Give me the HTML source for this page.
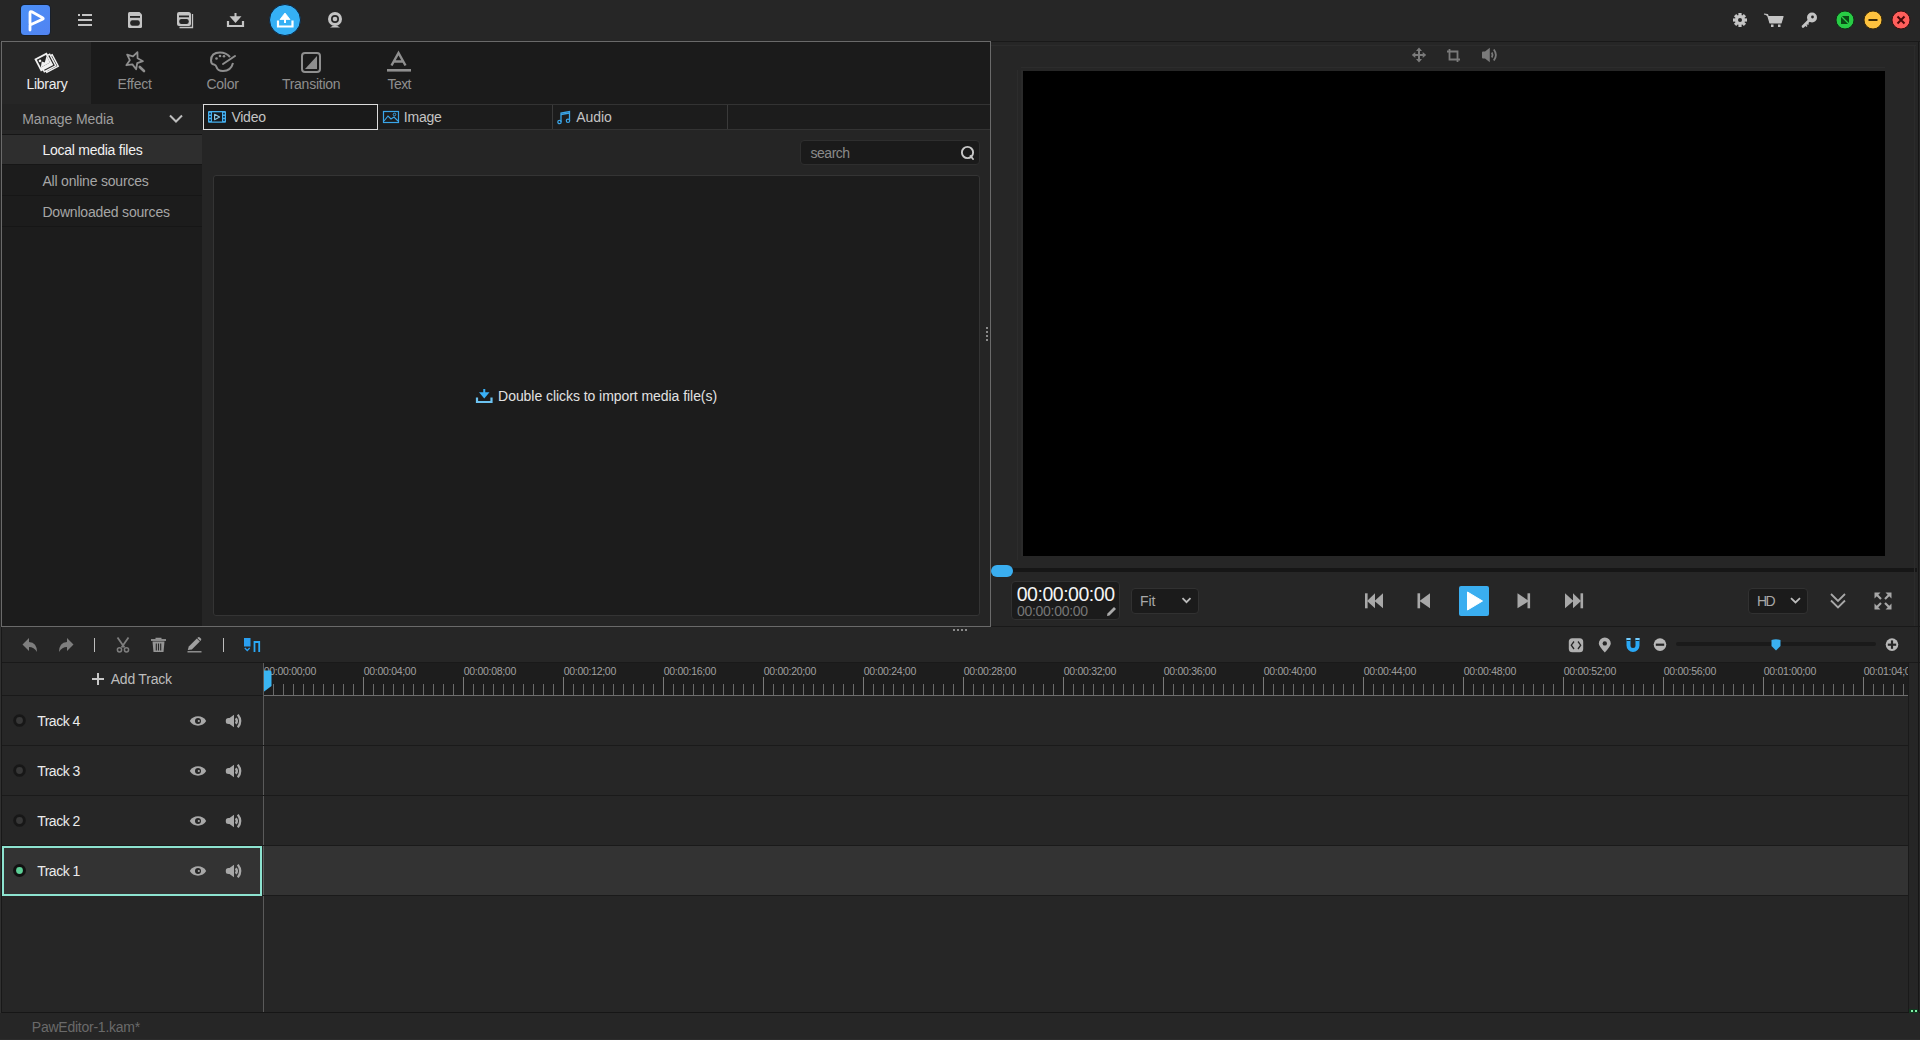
<!DOCTYPE html>
<html><head><meta charset="utf-8">
<style>
*{margin:0;padding:0;box-sizing:border-box}
html,body{width:1920px;height:1040px;overflow:hidden;background:#262626;font-family:"Liberation Sans",sans-serif;color:#aaa}
.a{position:absolute}
svg{position:absolute;overflow:visible}
.t{position:absolute;white-space:nowrap;line-height:1}
</style></head><body>
<div class="a" style="left:0px;top:0px;width:1920px;height:41px;background:#262626;"></div>
<div class="a" style="left:0px;top:41px;width:1920px;height:1px;background:#191919;"></div>
<svg style="left:20px;top:4px" width="32" height="32" viewBox="0 0 32 32"><defs><linearGradient id="lg" x1="0" y1="0" x2="1" y2="1"><stop offset="0" stop-color="#4a90f6"/><stop offset="1" stop-color="#5283f2"/></linearGradient></defs><rect x="0.5" y="0.5" width="30" height="31" rx="4" fill="#0b1a33"/><rect x="1" y="1" width="29" height="30" rx="3.5" fill="url(#lg)"/><path d="M10,26 V21 L22.5,15.2 Q24,14.5 22.5,13.7 L11.8,7.8 Q10,7 10,9 V19.5" fill="none" stroke="#fff" stroke-width="2.8" stroke-linecap="round" stroke-linejoin="round"/></svg>
<svg style="left:76px;top:12px" width="18" height="16" viewBox="0 0 18 16"><rect x="2" y="2" width="2" height="2" fill="#c4c4c4"/><rect x="6" y="2" width="10" height="2" fill="#c4c4c4"/><rect x="2" y="7" width="14" height="2" fill="#c4c4c4"/><rect x="2" y="12" width="14" height="2" fill="#c4c4c4"/></svg>
<svg style="left:126px;top:10px" width="18" height="20" viewBox="0 0 18 20"><path d="M3.5,2 H13.5 L16,4.5 V16.5 Q16,18 14.5,18 H3.5 Q2,18 2,16.5 V3.5 Q2,2 3.5,2 Z" fill="#c4c4c4"/><rect x="4" y="6" width="10" height="1.8" fill="#262626"/><rect x="4.2" y="10.2" width="9.6" height="5.6" rx="2.2" fill="#262626"/></svg>
<svg style="left:175px;top:10px" width="20" height="20" viewBox="0 0 20 20"><path d="M4,2 H13.5 Q16,2 16,4.5 V14 Q16,16 14,16 H4 Q2,16 2,14 V4 Q2,2 4,2 Z" fill="#c4c4c4"/><rect x="4" y="5.5" width="10" height="1.8" fill="#262626"/><rect x="4.2" y="9" width="9.6" height="5" rx="2.2" fill="#262626"/><path d="M17.5,4 V17.5 H4.5" fill="none" stroke="#c4c4c4" stroke-width="1.3"/></svg>
<svg style="left:225px;top:11px" width="20" height="18" viewBox="0 0 20 18"><path d="M3,10 V15 H18 V10" fill="none" stroke="#c4c4c4" stroke-width="2.2"/><rect x="9.5" y="2" width="2" height="6" fill="#c4c4c4"/><path d="M4.5,5.2 H16.5 L10.5,12 Z" fill="#c4c4c4"/></svg>
<svg style="left:268px;top:3px" width="34" height="34" viewBox="0 0 34 34"><circle cx="17" cy="17" r="15.5" fill="#35b0f5" stroke="#0b2540" stroke-width="1"/><path d="M10,17.5 V23.5 H24.5 V17.5" fill="none" stroke="#fff" stroke-width="2.2"/><path d="M12,16.5 L17,10 L22,16.5 Z" fill="#fff" stroke="#fff" stroke-width="0.8" stroke-linejoin="round"/><rect x="16" y="15" width="2" height="5" fill="#fff"/></svg>
<svg style="left:326px;top:10px" width="18" height="20" viewBox="0 0 18 20"><circle cx="9" cy="9" r="7" fill="#c4c4c4"/><circle cx="9" cy="9" r="4" fill="#262626"/><circle cx="9" cy="9" r="2.3" fill="#c4c4c4"/><path d="M4,17.5 Q9,13.5 14,17.5 Z" fill="#c4c4c4"/></svg>
<svg style="left:1732px;top:12px" width="16" height="16" viewBox="0 0 16 16"><g fill="#c4c4c4" transform="translate(8,8)"><rect x="-1.6" y="-7" width="3.2" height="4" transform="rotate(0)"/><rect x="-1.6" y="-7" width="3.2" height="4" transform="rotate(45)"/><rect x="-1.6" y="-7" width="3.2" height="4" transform="rotate(90)"/><rect x="-1.6" y="-7" width="3.2" height="4" transform="rotate(135)"/><rect x="-1.6" y="-7" width="3.2" height="4" transform="rotate(180)"/><rect x="-1.6" y="-7" width="3.2" height="4" transform="rotate(225)"/><rect x="-1.6" y="-7" width="3.2" height="4" transform="rotate(270)"/><rect x="-1.6" y="-7" width="3.2" height="4" transform="rotate(315)"/><circle r="5"/></g><circle cx="8" cy="8" r="2" fill="#262626"/></svg>
<svg style="left:1762px;top:12px" width="24" height="16" viewBox="0 0 24 16"><path d="M2,2 L5.5,2.5 L8,11 H19 L21,4.5 H6" fill="#c4c4c4" stroke="#c4c4c4" stroke-width="1.2" stroke-linejoin="round"/><rect x="9" y="12.5" width="2.5" height="2.5" fill="#c4c4c4"/><rect x="16" y="12.5" width="2.5" height="2.5" fill="#c4c4c4"/></svg>
<svg style="left:1800px;top:11px" width="18" height="18" viewBox="0 0 18 18"><circle cx="12" cy="6.5" r="5" fill="#c4c4c4"/><circle cx="12.5" cy="6" r="1.4" fill="#262626"/><path d="M9.5,9 L3,15.5" stroke="#c4c4c4" stroke-width="2.6" stroke-linecap="round"/><path d="M5,13.5 L7,15.5 M6.8,11.8 L8.5,13.5" stroke="#c4c4c4" stroke-width="1.6"/></svg>
<svg style="left:1835px;top:10px" width="20" height="20" viewBox="0 0 20 20"><circle cx="10" cy="10" r="9" fill="#28cc45" stroke="#0f3015" stroke-width="1"/><rect x="6" y="6" width="8" height="8" fill="#0a4a15"/><path d="M6,6 L14,14" stroke="#28cc45" stroke-width="1.3"/></svg>
<svg style="left:1863px;top:10px" width="20" height="20" viewBox="0 0 20 20"><circle cx="10" cy="10" r="9" fill="#fdc23e" stroke="#3a2a08" stroke-width="1"/><rect x="5.5" y="9" width="9" height="2" fill="#3c2a05"/></svg>
<svg style="left:1891px;top:10px" width="20" height="20" viewBox="0 0 20 20"><circle cx="10" cy="10" r="9" fill="#ff5e5b" stroke="#3a0f0f" stroke-width="1"/><path d="M6.5,6.5 L13.5,13.5 M13.5,6.5 L6.5,13.5" stroke="#4a0808" stroke-width="2"/></svg>
<div class="a" style="left:1px;top:41px;width:990px;height:586px;background:#252525;border:1px solid #6a6a6a"></div>
<div class="a" style="left:2px;top:42px;width:988px;height:62px;background:#1b1b1b;"></div>
<div class="a" style="left:2px;top:42px;width:89px;height:62px;background:#262626;"></div>
<svg style="left:30px;top:48px" width="32" height="28" viewBox="0 0 32 28"><g transform="translate(-30,-48)"><g transform="rotate(-28 49.5 63.5)"><rect x="43" y="57" width="13" height="13" fill="#262626" stroke="#f0f0f0" stroke-width="1.4"/></g><g transform="rotate(-28 47 63)"><rect x="40.5" y="56.5" width="13" height="13" fill="#262626" stroke="#f0f0f0" stroke-width="1.4"/></g><g transform="rotate(-28 43.8 62)"><rect x="36.8" y="55" width="14" height="14" fill="#f0f0f0"/><rect x="38.6" y="56.8" width="10.4" height="8.6" fill="#262626"/><path d="M38.6,65.4 L42.3,60.5 L44.5,62.8 L49,58 V65.4 Z" fill="#f0f0f0"/><circle cx="41" cy="59.2" r="1.3" fill="#f0f0f0"/></g></g></svg>
<div class="t" style="left:26.40px;top:77px;font-size:14px;color:#ececec;letter-spacing:-0.233px;">Library</div>
<svg style="left:123px;top:50px" width="24" height="24" viewBox="0 0 24 24"><path d="M14.43,2.18 L14.58,8.30 L19.97,11.19 L14.20,13.22 L13.12,19.25 L9.40,14.38 L3.33,15.22 L6.81,10.18 L4.15,4.67 L10.01,6.42 Z" fill="none" stroke="#8f8f8f" stroke-width="1.8" stroke-linejoin="round"/><path d="M16.8,17 L21,21" stroke="#8f8f8f" stroke-width="2.6" stroke-linecap="round"/></svg>
<div class="t" style="left:117.50px;top:77px;font-size:14px;color:#8f8f8f;letter-spacing:-0.208px;">Effect</div>
<svg style="left:208px;top:50px" width="30" height="24" viewBox="0 0 30 24"><path d="M22,7 Q18,2.5 12,2.5 Q3,2.5 3,10.5 Q3,14 6,14.5 Q8,15 8.5,17 Q9.5,21 15,21 Q23,21 25,13" fill="none" stroke="#8f8f8f" stroke-width="2"/><circle cx="8.5" cy="8.5" r="1.3" fill="#8f8f8f"/><circle cx="12" cy="6" r="1.3" fill="#8f8f8f"/><circle cx="16" cy="6.2" r="1.3" fill="#8f8f8f"/><path d="M15,14 L27,6" stroke="#8f8f8f" stroke-width="2" stroke-linecap="round"/></svg>
<div class="t" style="left:206.50px;top:77px;font-size:14px;color:#8f8f8f;letter-spacing:-0.264px;">Color</div>
<svg style="left:299px;top:50px" width="24" height="24" viewBox="0 0 24 24"><rect x="3" y="3" width="18" height="19" rx="3" fill="none" stroke="#8f8f8f" stroke-width="2"/><path d="M6,19 L18,6 V19 Z" fill="#8f8f8f"/></svg>
<div class="t" style="left:281.90px;top:77px;font-size:14px;color:#8f8f8f;letter-spacing:-0.250px;">Transition</div>
<svg style="left:385px;top:50px" width="28" height="24" viewBox="0 0 28 24"><path d="M6.5,15.5 L13.5,3 L20.5,15.5 M9,11.5 H18" fill="none" stroke="#8f8f8f" stroke-width="2.4"/><rect x="2" y="19" width="24" height="2.6" fill="#8f8f8f"/></svg>
<div class="t" style="left:387.50px;top:77px;font-size:14px;color:#8f8f8f;letter-spacing:-0.559px;">Text</div>
<div class="a" style="left:2px;top:104px;width:200px;height:522px;background:#1c1c1c;"></div>
<div class="a" style="left:2px;top:104px;width:200px;height:30px;background:#232323;"></div>
<div class="a" style="left:2px;top:130px;width:200px;height:4px;background:#262626;"></div>
<div class="a" style="left:2px;top:134px;width:200px;height:1px;background:#161616;"></div>
<div class="a" style="left:2px;top:135px;width:200px;height:29px;background:#2e2e2e;"></div>
<div class="a" style="left:2px;top:164px;width:200px;height:1px;background:#161616;"></div>
<div class="a" style="left:2px;top:195px;width:200px;height:1px;background:#161616;"></div>
<div class="a" style="left:2px;top:226px;width:200px;height:1px;background:#161616;"></div>
<div class="t" style="left:22.20px;top:112px;font-size:14px;color:#9e9e9e;letter-spacing:-0.092px;">Manage Media</div>
<svg style="left:166px;top:112px" width="20" height="14" viewBox="0 0 20 14"><path d="M4,3.5 L10,9.5 L16,3.5" fill="none" stroke="#bdbdbd" stroke-width="2"/></svg>
<div class="t" style="left:42.40px;top:143px;font-size:14px;color:#f2f2f2;letter-spacing:-0.249px;">Local media files</div>
<div class="t" style="left:42.40px;top:174px;font-size:14px;color:#a6a6a6;letter-spacing:-0.196px;">All online sources</div>
<div class="t" style="left:42.40px;top:205px;font-size:14px;color:#a6a6a6;letter-spacing:-0.185px;">Downloaded sources</div>
<div class="a" style="left:202px;top:104px;width:788px;height:26px;background:#1c1c1c;border-top:1px solid #333;border-bottom:1px solid #333"></div>
<div class="a" style="left:552px;top:105px;width:1px;height:24px;background:#3a3a3a;"></div>
<div class="a" style="left:727px;top:105px;width:1px;height:24px;background:#3a3a3a;"></div>
<div class="a" style="left:203px;top:104px;width:175px;height:26px;background:#1a1a1a;border:1px solid #dcdcdc"></div>
<svg style="left:206px;top:109px" width="24" height="16" viewBox="0 0 24 16"><rect x="2" y="2" width="18" height="11.7" rx="1" fill="#45b0ee"/><rect x="6" y="3.3" width="10" height="9.2" fill="#161a1e"/><g fill="#0c2a48"><rect x="3.2" y="3.8" width="1.7" height="1.7"/><rect x="3.2" y="7" width="1.7" height="1.7"/><rect x="3.2" y="10.2" width="1.7" height="1.7"/><rect x="17.1" y="3.8" width="1.7" height="1.7"/><rect x="17.1" y="7" width="1.7" height="1.7"/><rect x="17.1" y="10.2" width="1.7" height="1.7"/></g><path d="M8.6,5.3 L13.6,8 L8.6,10.7 Z" fill="none" stroke="#8ccbea" stroke-width="1.1" stroke-linejoin="round"/></svg>
<div class="t" style="left:231.40px;top:110px;font-size:14px;color:#c4c4c4;letter-spacing:-0.239px;">Video</div>
<svg style="left:381px;top:108px" width="20" height="18" viewBox="0 0 20 18"><rect x="2.5" y="3.5" width="15" height="11" fill="none" stroke="#3aa5e8" stroke-width="1.2"/><path d="M3,13 L7,8 L10,11 L13,9 L17,13" fill="none" stroke="#3aa5e8" stroke-width="1.1"/><circle cx="13.5" cy="6.5" r="1.3" fill="none" stroke="#3aa5e8" stroke-width="1"/></svg>
<div class="t" style="left:403.75px;top:110px;font-size:14px;color:#c4c4c4;letter-spacing:-0.203px;">Image</div>
<svg style="left:556px;top:108px" width="18" height="18" viewBox="0 0 18 18"><path d="M5,14 V5 L13.5,3.5 V12.5" fill="none" stroke="#3aa5e8" stroke-width="1.3"/><path d="M5,6.5 L13.5,5" stroke="#3aa5e8" stroke-width="1.3"/><circle cx="3.5" cy="14" r="1.7" fill="none" stroke="#3aa5e8" stroke-width="1.2"/><circle cx="12" cy="12.8" r="1.7" fill="none" stroke="#3aa5e8" stroke-width="1.2"/></svg>
<div class="t" style="left:576.20px;top:110px;font-size:14px;color:#c4c4c4;letter-spacing:-0.027px;">Audio</div>
<div class="a" style="left:800px;top:140px;width:180px;height:25px;background:#1a1a1a;border:1px solid #2e2e2e;border-radius:4px"></div>
<div class="t" style="left:810.60px;top:146px;font-size:14px;color:#8a8a8a;letter-spacing:-0.504px;">search</div>
<svg style="left:958px;top:144px" width="18" height="18" viewBox="0 0 18 18"><circle cx="9.5" cy="8.5" r="5.6" fill="none" stroke="#c8c8c8" stroke-width="1.9"/><path d="M12.5,12 L15,15" stroke="#c8c8c8" stroke-width="1.9" stroke-linecap="round"/></svg>
<div class="a" style="left:213px;top:175px;width:767px;height:441px;background:#1c1c1c;border:1px solid #343434;border-radius:3px"></div>
<svg style="left:474px;top:387px" width="20" height="18" viewBox="0 0 20 18"><path d="M3,10.5 V15 H17.5 V10.5" fill="none" stroke="#6cc2f0" stroke-width="2.2"/><path d="M5,5.2 H15.5 L10.25,11.6 Z" fill="#3ab0f5"/><rect x="9.25" y="2" width="2" height="5" fill="#3ab0f5"/></svg>
<div class="t" style="left:498.10px;top:389px;font-size:14px;color:#e2e2e2;letter-spacing:-0.055px;">Double clicks to import media file(s)</div>
<div class="a" style="left:986px;top:327px;width:2px;height:2px;background:#8a8a8a;"></div>
<div class="a" style="left:986px;top:331px;width:2px;height:2px;background:#8a8a8a;"></div>
<div class="a" style="left:986px;top:335px;width:2px;height:2px;background:#8a8a8a;"></div>
<div class="a" style="left:986px;top:339px;width:2px;height:2px;background:#8a8a8a;"></div>
<svg style="left:1410px;top:46px" width="18" height="18" viewBox="0 0 18 18"><g fill="#7a7a7a"><path d="M9,1.5 L12,5 H6 Z M9,16.5 L12,13 H6 Z M1.8,9 L5.3,6 V12 Z M16.2,9 L12.7,6 V12 Z"/><rect x="8" y="4" width="2" height="10"/><rect x="4" y="8" width="10" height="2"/></g></svg>
<svg style="left:1445px;top:47px" width="18" height="18" viewBox="0 0 18 18"><path d="M4.5,2 V12.5 H15 M2,4.5 H12.5 V15" fill="none" stroke="#7a7a7a" stroke-width="1.8"/></svg>
<svg style="left:1480px;top:46px" width="20" height="18" viewBox="0 0 20 18"><path d="M2,6.5 Q2,5.5 3,5.5 H5 L9.8,1.8 V16.2 L5,12.5 H3 Q2,12.5 2,11.5 Z" fill="#7a7a7a"/><path d="M11.8,6.5 Q13.3,9 11.8,11.5 M13.8,3.5 Q18,9 13.8,14.5" fill="none" stroke="#7a7a7a" stroke-width="1.8"/></svg>
<div class="a" style="left:1023px;top:71px;width:862px;height:485px;background:#000;"></div>
<div class="a" style="left:991px;top:568px;width:926px;height:4px;background:#161616;"></div>
<div class="a" style="left:991px;top:565px;width:22px;height:12px;background:#3aaef0;border-radius:6px"></div>
<div class="a" style="left:991px;top:626px;width:929px;height:1px;background:#191919;"></div>
<div class="a" style="left:1011px;top:581px;width:109px;height:39px;background:#1b1b1b;border:1px solid #313131;border-radius:4px"></div>
<div class="t" style="left:1016.70px;top:585px;font-size:19.5px;color:#f4f4f4;letter-spacing:-0.471px;">00:00:00:00</div>
<div class="t" style="left:1017.00px;top:604px;font-size:14px;color:#777;letter-spacing:-0.296px;">00:00:00:00</div>
<svg style="left:1104px;top:604px" width="14" height="14" viewBox="0 0 14 14"><path d="M3,12 L3.5,9.5 L10,3 L12,5 L5.5,11.5 Z" fill="#aaa"/></svg>
<div class="a" style="left:1131px;top:588px;width:68px;height:26px;background:#1b1b1b;border:1px solid #313131;border-radius:4px"></div>
<div class="t" style="left:1139.90px;top:594px;font-size:14px;color:#a8a8a8;">Fit</div>
<svg style="left:1180px;top:595px" width="12" height="10" viewBox="0 0 12 10"><path d="M2.5,3.2 L6.5,7.2 L10.5,3.2" fill="none" stroke="#bbb" stroke-width="1.8"/></svg>
<svg style="left:1362px;top:591px" width="24" height="20" viewBox="0 0 24 20"><rect x="3" y="2.3" width="2.6" height="15" fill="#a8a8a8"/><path d="M5,10 L13,2.3 V17.3 Z M12.5,10 L21,2.3 V17.3 Z" fill="#a8a8a8"/></svg>
<svg style="left:1415px;top:591px" width="18" height="20" viewBox="0 0 18 20"><rect x="2.5" y="2.3" width="2.6" height="15" fill="#a8a8a8"/><path d="M4.5,10 L15,2.3 V17.3 Z" fill="#a8a8a8"/></svg>
<div class="a" style="left:1459px;top:586px;width:30px;height:30px;background:#3aaef0;border-radius:2px"></div>
<svg style="left:1459px;top:586px" width="30" height="30" viewBox="0 0 30 30"><path d="M8.5,6 L23.5,15 L8.5,24 Z" fill="#fff" stroke="#fff" stroke-width="1" stroke-linejoin="round"/></svg>
<svg style="left:1516px;top:591px" width="18" height="20" viewBox="0 0 18 20"><rect x="11.5" y="2.3" width="2.6" height="15" fill="#a8a8a8"/><path d="M13,10 L1.5,2.3 V17.3 Z" fill="#a8a8a8"/></svg>
<svg style="left:1562px;top:591px" width="24" height="20" viewBox="0 0 24 20"><rect x="18.5" y="2.3" width="2.6" height="15" fill="#a8a8a8"/><path d="M19,10 L11,2.3 V17.3 Z M11.5,10 L3,2.3 V17.3 Z" fill="#a8a8a8"/></svg>
<div class="a" style="left:1748px;top:588px;width:60px;height:26px;background:#1b1b1b;border:1px solid #313131;border-radius:4px"></div>
<div class="t" style="left:1756.90px;top:594px;font-size:14px;color:#a8a8a8;letter-spacing:-1.621px;">HD</div>
<svg style="left:1788px;top:595px" width="14" height="10" viewBox="0 0 14 10"><path d="M3,3.2 L7.5,7.4 L12,3.2" fill="none" stroke="#bbb" stroke-width="1.8"/></svg>
<svg style="left:1827px;top:590px" width="22" height="22" viewBox="0 0 22 22"><path d="M4,4 L11,11 L18,4 M4,10.5 L11,17.5 L18,10.5" fill="none" stroke="#a8a8a8" stroke-width="1.8"/></svg>
<svg style="left:1872px;top:590px" width="22" height="22" viewBox="0 0 22 22"><g fill="#a8a8a8"><path d="M2.5,2.5 H8.5 L2.5,8.5 Z M19.5,2.5 H13.5 L19.5,8.5 Z M2.5,19.5 H8.5 L2.5,13.5 Z M19.5,19.5 H13.5 L19.5,13.5 Z"/></g><path d="M4,4 L9,9 M18,4 L13,9 M4,18 L9,13 M18,18 L13,13" stroke="#a8a8a8" stroke-width="2.2"/></svg>
<div class="a" style="left:0px;top:627px;width:1920px;height:35px;background:#262626;"></div>
<div class="a" style="left:0px;top:662px;width:1920px;height:1px;background:#191919;"></div>
<svg style="left:20px;top:636px" width="20" height="18" viewBox="0 0 20 18"><path d="M9,2 L2.5,8.5 L9,15 V11 Q14,11 17,16 Q17,6.5 9,6 Z" fill="#7e7e7e"/></svg>
<svg style="left:56px;top:636px" width="20" height="18" viewBox="0 0 20 18"><path d="M11,2 L17.5,8.5 L11,15 V11 Q6,11 3,16 Q3,6.5 11,6 Z" fill="#7e7e7e"/></svg>
<div class="a" style="left:94px;top:638px;width:1px;height:14px;background:#bdbdbd;"></div>
<svg style="left:114px;top:636px" width="18" height="18" viewBox="0 0 18 18"><path d="M3.5,1.5 L10.5,11.5 M14.5,1.5 L7.5,11.5" stroke="#7e7e7e" stroke-width="1.8"/><circle cx="5.5" cy="13.8" r="2.1" fill="none" stroke="#7e7e7e" stroke-width="1.5"/><circle cx="12.5" cy="13.8" r="2.1" fill="none" stroke="#7e7e7e" stroke-width="1.5"/></svg>
<svg style="left:150px;top:636px" width="18" height="18" viewBox="0 0 18 18"><path d="M1,4 H16" stroke="#959595" stroke-width="1.8"/><path d="M5.5,2.5 H11.5" stroke="#959595" stroke-width="1.5"/><path d="M2.5,5.5 H14.5 L13.5,16 H3.5 Z" fill="#959595"/><path d="M6.3,7.5 V14.5 M8.5,7.5 V14.5 M10.7,7.5 V14.5" stroke="#262626" stroke-width="1.1"/></svg>
<svg style="left:186px;top:636px" width="18" height="18" viewBox="0 0 18 18"><path d="M1.8,14 L2.8,10.5 L10.8,2.5 L13.8,5.5 L5.8,13.5 Z" fill="#a0a0a0"/><path d="M11.8,1.5 Q12.8,0.5 13.8,1.5 L14.8,2.5 Q15.8,3.5 14.8,4.5 L14.3,5 L11.3,2 Z" fill="#a0a0a0"/><path d="M1.5,15.8 H15.5" stroke="#a0a0a0" stroke-width="1.3"/></svg>
<div class="a" style="left:223px;top:638px;width:1px;height:14px;background:#bdbdbd;"></div>
<svg style="left:242px;top:636px" width="20" height="18" viewBox="0 0 20 18"><rect x="2" y="2" width="6.5" height="8.5" fill="#2a9ff0"/><path d="M2.8,12 L5.25,14.5 L7.7,12" fill="none" stroke="#2a9ff0" stroke-width="1.3"/><path d="M12.5,16 V6 H17.2 V16" fill="none" stroke="#2aa8f5" stroke-width="1.8"/></svg>
<svg style="left:1567px;top:636px" width="18" height="18" viewBox="0 0 18 18"><rect x="1.8" y="2.2" width="14.4" height="14" rx="3.5" fill="#b0b0b0"/><path d="M7,5.5 L4.3,9.2 L7,13 M11,5.5 L13.7,9.2 L11,13" fill="none" stroke="#262626" stroke-width="1.3"/></svg>
<svg style="left:1597px;top:636px" width="16" height="18" viewBox="0 0 16 18"><path d="M7.8,16.5 Q1.8,10 1.8,7.5 A6,6 0 0 1 13.8,7.5 Q13.8,10 7.8,16.5 Z" fill="#b0b0b0"/><circle cx="7.8" cy="7.4" r="2.2" fill="#262626"/></svg>
<svg style="left:1624px;top:636px" width="18" height="18" viewBox="0 0 18 18"><path d="M4.5,2 V9.5 A4.5,4.5 0 0 0 13.5,9.5 V2" fill="none" stroke="#2aa8f5" stroke-width="4"/><path d="M2.5,4.5 H6.5 M11.5,4.5 H15.5" stroke="#103040" stroke-width="1"/><path d="M2.5,3 H6.5 M11.5,3 H15.5" stroke="#8fd8ff" stroke-width="1.3"/></svg>
<svg style="left:1652px;top:637px" width="16" height="16" viewBox="0 0 16 16"><circle cx="8" cy="7.6" r="6.3" fill="#b8b8b8"/><rect x="3.8" y="6.6" width="8.4" height="2.2" fill="#262626"/></svg>
<div class="a" style="left:1676px;top:642px;width:200px;height:4px;background:#1a1a1a;border-radius:2px"></div>
<svg style="left:1770px;top:638px" width="12" height="14" viewBox="0 0 12 14"><path d="M1.5,2 Q6,0.5 10.5,2 V8 L6,12.5 L1.5,8 Z" fill="#3ab0f0"/></svg>
<svg style="left:1884px;top:637px" width="16" height="16" viewBox="0 0 16 16"><circle cx="8" cy="7.6" r="6.3" fill="#b8b8b8"/><rect x="3.8" y="6.6" width="8.4" height="2.2" fill="#262626"/><rect x="6.9" y="3.4" width="2.2" height="8.4" fill="#262626"/></svg>
<div class="a" style="left:263px;top:663px;width:1645px;height:32px;background:#1d1d1d;"></div>
<div class="a" style="left:263px;top:695px;width:1645px;height:1px;background:#6e6e6e;"></div>
<svg style="left:263px;top:663px" width="1645" height="33" viewBox="0 0 1645 33"><rect x="0" y="14" width="1" height="18" fill="#7a7a7a"/><rect x="10" y="21" width="1" height="11" fill="#6a6a6a"/><rect x="20" y="21" width="1" height="11" fill="#6a6a6a"/><rect x="30" y="21" width="1" height="11" fill="#6a6a6a"/><rect x="40" y="21" width="1" height="11" fill="#6a6a6a"/><rect x="50" y="21" width="1" height="11" fill="#6a6a6a"/><rect x="60" y="21" width="1" height="11" fill="#6a6a6a"/><rect x="70" y="21" width="1" height="11" fill="#6a6a6a"/><rect x="80" y="21" width="1" height="11" fill="#6a6a6a"/><rect x="90" y="21" width="1" height="11" fill="#6a6a6a"/><rect x="100" y="14" width="1" height="18" fill="#7a7a7a"/><rect x="110" y="21" width="1" height="11" fill="#6a6a6a"/><rect x="120" y="21" width="1" height="11" fill="#6a6a6a"/><rect x="130" y="21" width="1" height="11" fill="#6a6a6a"/><rect x="140" y="21" width="1" height="11" fill="#6a6a6a"/><rect x="150" y="21" width="1" height="11" fill="#6a6a6a"/><rect x="160" y="21" width="1" height="11" fill="#6a6a6a"/><rect x="170" y="21" width="1" height="11" fill="#6a6a6a"/><rect x="180" y="21" width="1" height="11" fill="#6a6a6a"/><rect x="190" y="21" width="1" height="11" fill="#6a6a6a"/><rect x="200" y="14" width="1" height="18" fill="#7a7a7a"/><rect x="210" y="21" width="1" height="11" fill="#6a6a6a"/><rect x="220" y="21" width="1" height="11" fill="#6a6a6a"/><rect x="230" y="21" width="1" height="11" fill="#6a6a6a"/><rect x="240" y="21" width="1" height="11" fill="#6a6a6a"/><rect x="250" y="21" width="1" height="11" fill="#6a6a6a"/><rect x="260" y="21" width="1" height="11" fill="#6a6a6a"/><rect x="270" y="21" width="1" height="11" fill="#6a6a6a"/><rect x="280" y="21" width="1" height="11" fill="#6a6a6a"/><rect x="290" y="21" width="1" height="11" fill="#6a6a6a"/><rect x="300" y="14" width="1" height="18" fill="#7a7a7a"/><rect x="310" y="21" width="1" height="11" fill="#6a6a6a"/><rect x="320" y="21" width="1" height="11" fill="#6a6a6a"/><rect x="330" y="21" width="1" height="11" fill="#6a6a6a"/><rect x="340" y="21" width="1" height="11" fill="#6a6a6a"/><rect x="350" y="21" width="1" height="11" fill="#6a6a6a"/><rect x="360" y="21" width="1" height="11" fill="#6a6a6a"/><rect x="370" y="21" width="1" height="11" fill="#6a6a6a"/><rect x="380" y="21" width="1" height="11" fill="#6a6a6a"/><rect x="390" y="21" width="1" height="11" fill="#6a6a6a"/><rect x="400" y="14" width="1" height="18" fill="#7a7a7a"/><rect x="410" y="21" width="1" height="11" fill="#6a6a6a"/><rect x="420" y="21" width="1" height="11" fill="#6a6a6a"/><rect x="430" y="21" width="1" height="11" fill="#6a6a6a"/><rect x="440" y="21" width="1" height="11" fill="#6a6a6a"/><rect x="450" y="21" width="1" height="11" fill="#6a6a6a"/><rect x="460" y="21" width="1" height="11" fill="#6a6a6a"/><rect x="470" y="21" width="1" height="11" fill="#6a6a6a"/><rect x="480" y="21" width="1" height="11" fill="#6a6a6a"/><rect x="490" y="21" width="1" height="11" fill="#6a6a6a"/><rect x="500" y="14" width="1" height="18" fill="#7a7a7a"/><rect x="510" y="21" width="1" height="11" fill="#6a6a6a"/><rect x="520" y="21" width="1" height="11" fill="#6a6a6a"/><rect x="530" y="21" width="1" height="11" fill="#6a6a6a"/><rect x="540" y="21" width="1" height="11" fill="#6a6a6a"/><rect x="550" y="21" width="1" height="11" fill="#6a6a6a"/><rect x="560" y="21" width="1" height="11" fill="#6a6a6a"/><rect x="570" y="21" width="1" height="11" fill="#6a6a6a"/><rect x="580" y="21" width="1" height="11" fill="#6a6a6a"/><rect x="590" y="21" width="1" height="11" fill="#6a6a6a"/><rect x="600" y="14" width="1" height="18" fill="#7a7a7a"/><rect x="610" y="21" width="1" height="11" fill="#6a6a6a"/><rect x="620" y="21" width="1" height="11" fill="#6a6a6a"/><rect x="630" y="21" width="1" height="11" fill="#6a6a6a"/><rect x="640" y="21" width="1" height="11" fill="#6a6a6a"/><rect x="650" y="21" width="1" height="11" fill="#6a6a6a"/><rect x="660" y="21" width="1" height="11" fill="#6a6a6a"/><rect x="670" y="21" width="1" height="11" fill="#6a6a6a"/><rect x="680" y="21" width="1" height="11" fill="#6a6a6a"/><rect x="690" y="21" width="1" height="11" fill="#6a6a6a"/><rect x="700" y="14" width="1" height="18" fill="#7a7a7a"/><rect x="710" y="21" width="1" height="11" fill="#6a6a6a"/><rect x="720" y="21" width="1" height="11" fill="#6a6a6a"/><rect x="730" y="21" width="1" height="11" fill="#6a6a6a"/><rect x="740" y="21" width="1" height="11" fill="#6a6a6a"/><rect x="750" y="21" width="1" height="11" fill="#6a6a6a"/><rect x="760" y="21" width="1" height="11" fill="#6a6a6a"/><rect x="770" y="21" width="1" height="11" fill="#6a6a6a"/><rect x="780" y="21" width="1" height="11" fill="#6a6a6a"/><rect x="790" y="21" width="1" height="11" fill="#6a6a6a"/><rect x="800" y="14" width="1" height="18" fill="#7a7a7a"/><rect x="810" y="21" width="1" height="11" fill="#6a6a6a"/><rect x="820" y="21" width="1" height="11" fill="#6a6a6a"/><rect x="830" y="21" width="1" height="11" fill="#6a6a6a"/><rect x="840" y="21" width="1" height="11" fill="#6a6a6a"/><rect x="850" y="21" width="1" height="11" fill="#6a6a6a"/><rect x="860" y="21" width="1" height="11" fill="#6a6a6a"/><rect x="870" y="21" width="1" height="11" fill="#6a6a6a"/><rect x="880" y="21" width="1" height="11" fill="#6a6a6a"/><rect x="890" y="21" width="1" height="11" fill="#6a6a6a"/><rect x="900" y="14" width="1" height="18" fill="#7a7a7a"/><rect x="910" y="21" width="1" height="11" fill="#6a6a6a"/><rect x="920" y="21" width="1" height="11" fill="#6a6a6a"/><rect x="930" y="21" width="1" height="11" fill="#6a6a6a"/><rect x="940" y="21" width="1" height="11" fill="#6a6a6a"/><rect x="950" y="21" width="1" height="11" fill="#6a6a6a"/><rect x="960" y="21" width="1" height="11" fill="#6a6a6a"/><rect x="970" y="21" width="1" height="11" fill="#6a6a6a"/><rect x="980" y="21" width="1" height="11" fill="#6a6a6a"/><rect x="990" y="21" width="1" height="11" fill="#6a6a6a"/><rect x="1000" y="14" width="1" height="18" fill="#7a7a7a"/><rect x="1010" y="21" width="1" height="11" fill="#6a6a6a"/><rect x="1020" y="21" width="1" height="11" fill="#6a6a6a"/><rect x="1030" y="21" width="1" height="11" fill="#6a6a6a"/><rect x="1040" y="21" width="1" height="11" fill="#6a6a6a"/><rect x="1050" y="21" width="1" height="11" fill="#6a6a6a"/><rect x="1060" y="21" width="1" height="11" fill="#6a6a6a"/><rect x="1070" y="21" width="1" height="11" fill="#6a6a6a"/><rect x="1080" y="21" width="1" height="11" fill="#6a6a6a"/><rect x="1090" y="21" width="1" height="11" fill="#6a6a6a"/><rect x="1100" y="14" width="1" height="18" fill="#7a7a7a"/><rect x="1110" y="21" width="1" height="11" fill="#6a6a6a"/><rect x="1120" y="21" width="1" height="11" fill="#6a6a6a"/><rect x="1130" y="21" width="1" height="11" fill="#6a6a6a"/><rect x="1140" y="21" width="1" height="11" fill="#6a6a6a"/><rect x="1150" y="21" width="1" height="11" fill="#6a6a6a"/><rect x="1160" y="21" width="1" height="11" fill="#6a6a6a"/><rect x="1170" y="21" width="1" height="11" fill="#6a6a6a"/><rect x="1180" y="21" width="1" height="11" fill="#6a6a6a"/><rect x="1190" y="21" width="1" height="11" fill="#6a6a6a"/><rect x="1200" y="14" width="1" height="18" fill="#7a7a7a"/><rect x="1210" y="21" width="1" height="11" fill="#6a6a6a"/><rect x="1220" y="21" width="1" height="11" fill="#6a6a6a"/><rect x="1230" y="21" width="1" height="11" fill="#6a6a6a"/><rect x="1240" y="21" width="1" height="11" fill="#6a6a6a"/><rect x="1250" y="21" width="1" height="11" fill="#6a6a6a"/><rect x="1260" y="21" width="1" height="11" fill="#6a6a6a"/><rect x="1270" y="21" width="1" height="11" fill="#6a6a6a"/><rect x="1280" y="21" width="1" height="11" fill="#6a6a6a"/><rect x="1290" y="21" width="1" height="11" fill="#6a6a6a"/><rect x="1300" y="14" width="1" height="18" fill="#7a7a7a"/><rect x="1310" y="21" width="1" height="11" fill="#6a6a6a"/><rect x="1320" y="21" width="1" height="11" fill="#6a6a6a"/><rect x="1330" y="21" width="1" height="11" fill="#6a6a6a"/><rect x="1340" y="21" width="1" height="11" fill="#6a6a6a"/><rect x="1350" y="21" width="1" height="11" fill="#6a6a6a"/><rect x="1360" y="21" width="1" height="11" fill="#6a6a6a"/><rect x="1370" y="21" width="1" height="11" fill="#6a6a6a"/><rect x="1380" y="21" width="1" height="11" fill="#6a6a6a"/><rect x="1390" y="21" width="1" height="11" fill="#6a6a6a"/><rect x="1400" y="14" width="1" height="18" fill="#7a7a7a"/><rect x="1410" y="21" width="1" height="11" fill="#6a6a6a"/><rect x="1420" y="21" width="1" height="11" fill="#6a6a6a"/><rect x="1430" y="21" width="1" height="11" fill="#6a6a6a"/><rect x="1440" y="21" width="1" height="11" fill="#6a6a6a"/><rect x="1450" y="21" width="1" height="11" fill="#6a6a6a"/><rect x="1460" y="21" width="1" height="11" fill="#6a6a6a"/><rect x="1470" y="21" width="1" height="11" fill="#6a6a6a"/><rect x="1480" y="21" width="1" height="11" fill="#6a6a6a"/><rect x="1490" y="21" width="1" height="11" fill="#6a6a6a"/><rect x="1500" y="14" width="1" height="18" fill="#7a7a7a"/><rect x="1510" y="21" width="1" height="11" fill="#6a6a6a"/><rect x="1520" y="21" width="1" height="11" fill="#6a6a6a"/><rect x="1530" y="21" width="1" height="11" fill="#6a6a6a"/><rect x="1540" y="21" width="1" height="11" fill="#6a6a6a"/><rect x="1550" y="21" width="1" height="11" fill="#6a6a6a"/><rect x="1560" y="21" width="1" height="11" fill="#6a6a6a"/><rect x="1570" y="21" width="1" height="11" fill="#6a6a6a"/><rect x="1580" y="21" width="1" height="11" fill="#6a6a6a"/><rect x="1590" y="21" width="1" height="11" fill="#6a6a6a"/><rect x="1600" y="14" width="1" height="18" fill="#7a7a7a"/><rect x="1610" y="21" width="1" height="11" fill="#6a6a6a"/><rect x="1620" y="21" width="1" height="11" fill="#6a6a6a"/><rect x="1630" y="21" width="1" height="11" fill="#6a6a6a"/><rect x="1640" y="21" width="1" height="11" fill="#6a6a6a"/></svg>
<div class="t" style="left:263.75px;top:666px;font-size:10.5px;color:#a0a0a0;letter-spacing:-0.297px;">00:00:00;00</div>
<div class="t" style="left:363.75px;top:666px;font-size:10.5px;color:#a0a0a0;letter-spacing:-0.297px;">00:00:04;00</div>
<div class="t" style="left:463.75px;top:666px;font-size:10.5px;color:#a0a0a0;letter-spacing:-0.297px;">00:00:08;00</div>
<div class="t" style="left:563.75px;top:666px;font-size:10.5px;color:#a0a0a0;letter-spacing:-0.297px;">00:00:12;00</div>
<div class="t" style="left:663.75px;top:666px;font-size:10.5px;color:#a0a0a0;letter-spacing:-0.297px;">00:00:16;00</div>
<div class="t" style="left:763.75px;top:666px;font-size:10.5px;color:#a0a0a0;letter-spacing:-0.297px;">00:00:20;00</div>
<div class="t" style="left:863.75px;top:666px;font-size:10.5px;color:#a0a0a0;letter-spacing:-0.297px;">00:00:24;00</div>
<div class="t" style="left:963.75px;top:666px;font-size:10.5px;color:#a0a0a0;letter-spacing:-0.297px;">00:00:28;00</div>
<div class="t" style="left:1063.75px;top:666px;font-size:10.5px;color:#a0a0a0;letter-spacing:-0.297px;">00:00:32;00</div>
<div class="t" style="left:1163.75px;top:666px;font-size:10.5px;color:#a0a0a0;letter-spacing:-0.297px;">00:00:36;00</div>
<div class="t" style="left:1263.75px;top:666px;font-size:10.5px;color:#a0a0a0;letter-spacing:-0.297px;">00:00:40;00</div>
<div class="t" style="left:1363.75px;top:666px;font-size:10.5px;color:#a0a0a0;letter-spacing:-0.297px;">00:00:44;00</div>
<div class="t" style="left:1463.75px;top:666px;font-size:10.5px;color:#a0a0a0;letter-spacing:-0.297px;">00:00:48;00</div>
<div class="t" style="left:1563.75px;top:666px;font-size:10.5px;color:#a0a0a0;letter-spacing:-0.297px;">00:00:52;00</div>
<div class="t" style="left:1663.75px;top:666px;font-size:10.5px;color:#a0a0a0;letter-spacing:-0.297px;">00:00:56;00</div>
<div class="t" style="left:1763.75px;top:666px;font-size:10.5px;color:#a0a0a0;letter-spacing:-0.297px;">00:01:00;00</div>
<div class="t" style="left:1863.75px;top:666px;font-size:10.5px;color:#a0a0a0;letter-spacing:-0.297px;">00:01:04;00</div>
<div class="a" style="left:1908px;top:663px;width:12px;height:350px;background:#262626;"></div>
<svg style="left:262px;top:669px" width="12" height="25" viewBox="0 0 12 25"><path d="M1.5,2.5 Q1.5,1.5 2.5,1.5 H8 Q9.5,1.5 9.5,3 V17 L1.5,23 Z" fill="#3ab5f2"/></svg>
<div class="a" style="left:0px;top:695px;width:263px;height:1px;background:#191919;"></div>
<div class="a" style="left:92px;top:678px;width:12px;height:2px;background:#c8c8c8;"></div>
<div class="a" style="left:97px;top:673px;width:2px;height:12px;background:#c8c8c8;"></div>
<div class="t" style="left:110.70px;top:672px;font-size:14px;color:#bdbdbd;letter-spacing:-0.216px;">Add Track</div>
<div class="a" style="left:263px;top:663px;width:1px;height:350px;background:#5a5a5a;"></div>
<div class="a" style="left:0px;top:745px;width:1908px;height:1px;background:#1a1a1a;"></div>
<svg style="left:11px;top:712px" width="17" height="17" viewBox="0 0 17 17"><circle cx="8.5" cy="8.5" r="6.3" fill="#171717"/><circle cx="8.5" cy="8.5" r="3.4" fill="#383838"/></svg>
<div class="t" style="left:37.20px;top:714px;font-size:14px;color:#ececec;letter-spacing:-0.510px;">Track 4</div>
<svg style="left:188px;top:713px" width="20" height="16" viewBox="0 0 20 16"><path d="M1.8,8 C5,1.8 15,1.8 18.2,8 C15,14.2 5,14.2 1.8,8 Z" fill="#a8a8a8"/><circle cx="10" cy="8" r="3" fill="#262626"/><circle cx="10.8" cy="8" r="1.1" fill="#a8a8a8"/></svg>
<svg style="left:224px;top:712px" width="20" height="18" viewBox="0 0 20 18"><path d="M1.8,8.5 Q1.8,6 4.5,6 L5.5,6 L10,2.8 V15.2 L5.5,12 L4.5,12 Q1.8,12 1.8,9.5 Z" fill="#a8a8a8"/><path d="M11.8,6.2 Q14,9 11.8,11.8 M13.8,2.6 Q18.6,9 13.8,15.4" fill="none" stroke="#a8a8a8" stroke-width="2.3"/></svg>
<div class="a" style="left:0px;top:795px;width:1908px;height:1px;background:#1a1a1a;"></div>
<svg style="left:11px;top:762px" width="17" height="17" viewBox="0 0 17 17"><circle cx="8.5" cy="8.5" r="6.3" fill="#171717"/><circle cx="8.5" cy="8.5" r="3.4" fill="#383838"/></svg>
<div class="t" style="left:37.20px;top:764px;font-size:14px;color:#ececec;letter-spacing:-0.510px;">Track 3</div>
<svg style="left:188px;top:763px" width="20" height="16" viewBox="0 0 20 16"><path d="M1.8,8 C5,1.8 15,1.8 18.2,8 C15,14.2 5,14.2 1.8,8 Z" fill="#a8a8a8"/><circle cx="10" cy="8" r="3" fill="#262626"/><circle cx="10.8" cy="8" r="1.1" fill="#a8a8a8"/></svg>
<svg style="left:224px;top:762px" width="20" height="18" viewBox="0 0 20 18"><path d="M1.8,8.5 Q1.8,6 4.5,6 L5.5,6 L10,2.8 V15.2 L5.5,12 L4.5,12 Q1.8,12 1.8,9.5 Z" fill="#a8a8a8"/><path d="M11.8,6.2 Q14,9 11.8,11.8 M13.8,2.6 Q18.6,9 13.8,15.4" fill="none" stroke="#a8a8a8" stroke-width="2.3"/></svg>
<div class="a" style="left:0px;top:845px;width:1908px;height:1px;background:#1a1a1a;"></div>
<svg style="left:11px;top:812px" width="17" height="17" viewBox="0 0 17 17"><circle cx="8.5" cy="8.5" r="6.3" fill="#171717"/><circle cx="8.5" cy="8.5" r="3.4" fill="#383838"/></svg>
<div class="t" style="left:37.20px;top:814px;font-size:14px;color:#ececec;letter-spacing:-0.510px;">Track 2</div>
<svg style="left:188px;top:813px" width="20" height="16" viewBox="0 0 20 16"><path d="M1.8,8 C5,1.8 15,1.8 18.2,8 C15,14.2 5,14.2 1.8,8 Z" fill="#a8a8a8"/><circle cx="10" cy="8" r="3" fill="#262626"/><circle cx="10.8" cy="8" r="1.1" fill="#a8a8a8"/></svg>
<svg style="left:224px;top:812px" width="20" height="18" viewBox="0 0 20 18"><path d="M1.8,8.5 Q1.8,6 4.5,6 L5.5,6 L10,2.8 V15.2 L5.5,12 L4.5,12 Q1.8,12 1.8,9.5 Z" fill="#a8a8a8"/><path d="M11.8,6.2 Q14,9 11.8,11.8 M13.8,2.6 Q18.6,9 13.8,15.4" fill="none" stroke="#a8a8a8" stroke-width="2.3"/></svg>
<div class="a" style="left:0px;top:895px;width:1908px;height:1px;background:#1a1a1a;"></div>
<div class="a" style="left:264px;top:846px;width:1644px;height:49px;background:#333333;"></div>
<div class="a" style="left:2px;top:846px;width:260px;height:50px;background:#333333;border:2px solid #8de3d0"></div>
<svg style="left:11px;top:862px" width="17" height="17" viewBox="0 0 17 17"><circle cx="8.5" cy="8.5" r="6.5" fill="#111"/><circle cx="8.5" cy="8.5" r="3.4" fill="#5ccf96"/></svg>
<div class="t" style="left:37.20px;top:864px;font-size:14px;color:#ececec;letter-spacing:-0.510px;">Track 1</div>
<svg style="left:188px;top:863px" width="20" height="16" viewBox="0 0 20 16"><path d="M1.8,8 C5,1.8 15,1.8 18.2,8 C15,14.2 5,14.2 1.8,8 Z" fill="#a8a8a8"/><circle cx="10" cy="8" r="3" fill="#262626"/><circle cx="10.8" cy="8" r="1.1" fill="#a8a8a8"/></svg>
<svg style="left:224px;top:862px" width="20" height="18" viewBox="0 0 20 18"><path d="M1.8,8.5 Q1.8,6 4.5,6 L5.5,6 L10,2.8 V15.2 L5.5,12 L4.5,12 Q1.8,12 1.8,9.5 Z" fill="#a8a8a8"/><path d="M11.8,6.2 Q14,9 11.8,11.8 M13.8,2.6 Q18.6,9 13.8,15.4" fill="none" stroke="#a8a8a8" stroke-width="2.3"/></svg>
<div class="a" style="left:0px;top:1012px;width:1920px;height:1px;background:#161616;"></div>
<div class="a" style="left:1908px;top:663px;width:1px;height:349px;background:#1a1a1a;"></div>
<div class="a" style="left:1909px;top:1009px;width:10px;height:4px;background:#123a20;"></div>
<div class="a" style="left:1911px;top:1010px;width:2px;height:2px;background:#7ef0a8;"></div>
<div class="a" style="left:1915px;top:1010px;width:2px;height:2px;background:#7ef0a8;"></div>
<div class="t" style="left:31.80px;top:1020px;font-size:14px;color:#6a6a6a;letter-spacing:-0.243px;">PawEditor-1.kam*</div>
<div class="a" style="left:1918px;top:42px;width:1px;height:970px;background:#161616;"></div>
<div class="a" style="left:1914px;top:46px;width:1px;height:580px;background:#2b2b2b;"></div>
<div class="a" style="left:991px;top:45px;width:925px;height:1px;background:#2c2c2c;"></div>
<div class="a" style="left:1021px;top:67px;width:864px;height:1px;background:#2c2c2c;"></div>
<div class="a" style="left:1017px;top:70px;width:1px;height:490px;background:#2c2c2c;"></div>
<div class="a" style="left:1021px;top:70px;width:2px;height:486px;background:#2a2a2a;"></div>
<div class="a" style="left:0px;top:627px;width:1px;height:386px;background:#303030;"></div>
<div class="a" style="left:1px;top:627px;width:1px;height:386px;background:#181818;"></div>
<div class="a" style="left:0px;top:1039px;width:1920px;height:1px;background:#2c2c2c;"></div>
<div class="a" style="left:953px;top:629px;width:2px;height:2px;background:#8a8a8a;"></div>
<div class="a" style="left:957px;top:629px;width:2px;height:2px;background:#8a8a8a;"></div>
<div class="a" style="left:961px;top:629px;width:2px;height:2px;background:#8a8a8a;"></div>
<div class="a" style="left:965px;top:629px;width:2px;height:2px;background:#8a8a8a;"></div>
</body></html>
